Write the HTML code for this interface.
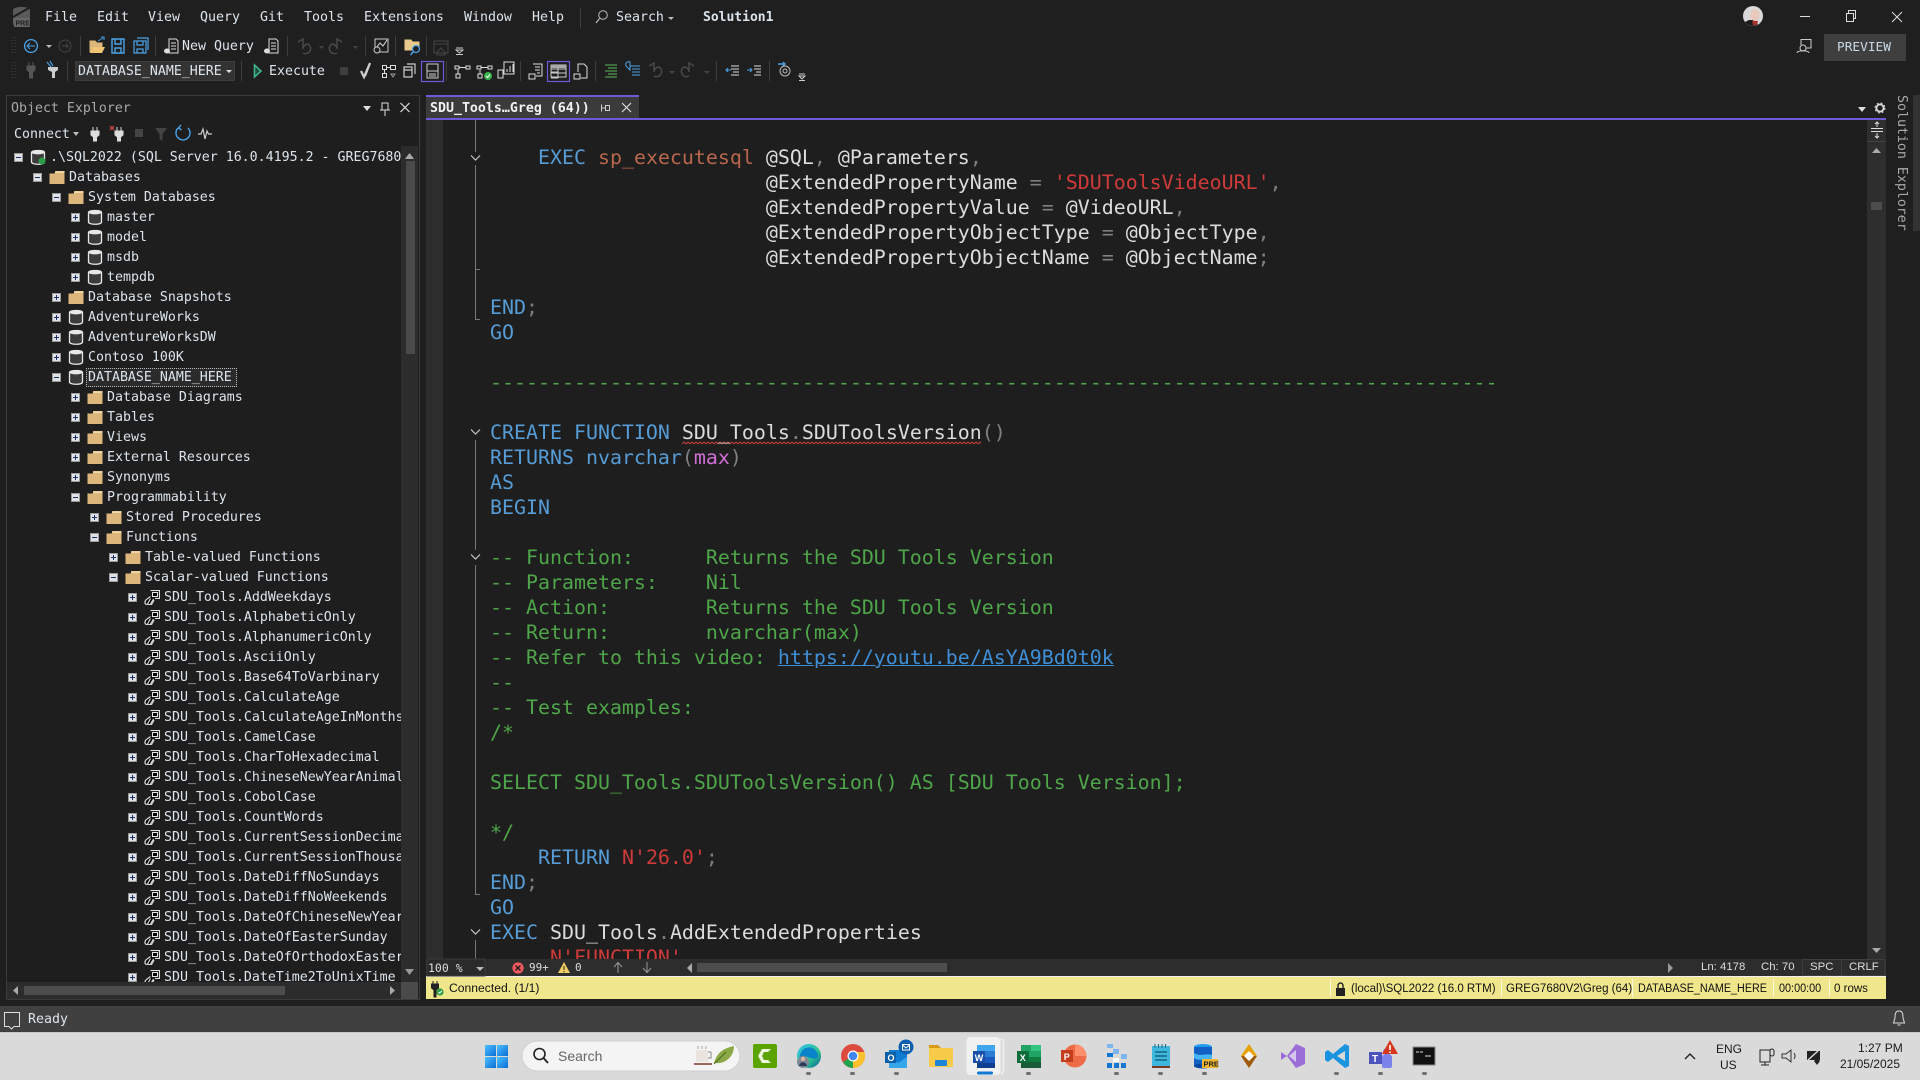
<!DOCTYPE html>
<html lang="en"><head><meta charset="utf-8"><title>SSMS</title>
<style>
*{box-sizing:border-box}
html,body{margin:0;padding:0;width:1920px;height:1080px;overflow:hidden;background:#1f1f1f}
body{position:relative;font-family:"DejaVu Sans Mono","Liberation Mono",monospace;font-size:13.28px;color:#dce4ec}
.a{position:absolute;white-space:pre;line-height:20px}
#bg{position:absolute;left:0;top:0;width:1920px;height:1080px}
#tree{position:absolute;left:0;top:148px;width:401px;height:834px;overflow:hidden}
.r{position:relative;height:20px;line-height:20px;white-space:pre;padding-left:calc(50px + 19px*var(--l))}
.r i{position:absolute;left:calc(14px + 19px*var(--l));top:5px;width:9px;height:9px;background:#dfe2e6;border:1px solid #9a9a9a}
.r i::before{content:"";position:absolute;left:1px;top:3px;width:5px;height:1px;background:#1c2f60}
.r i.p::after{content:"";position:absolute;left:3px;top:1px;width:1px;height:5px;background:#1c2f60}
.r svg{position:absolute;left:calc(30px + 19px*var(--l));top:1px;width:16px;height:16px}
.sel{display:inline-block;height:19px;line-height:17px;margin:0 0 0 -2px;padding:0 3px 0 1px;border:1px dotted #bbb;background:#2b2b2b;width:151px}
.l0{--l:0}.l1{--l:1}.l2{--l:2}.l3{--l:3}.l4{--l:4}.l5{--l:5}.l6{--l:6}
#code{position:absolute;left:443px;top:120px;width:1424px;height:839px;overflow:hidden;font-size:19.93px;color:#dcdcdc}
#code div{position:absolute;left:47px;height:25px;line-height:25px;white-space:pre}
.k{color:#569cd6}.c{color:#4fa64a}.s{color:#cf3a3a}.o{color:#808080}.f{color:#b9674c}.m{color:#d16fd6}.u{color:#3f8fd6;text-decoration:underline}
.y{position:absolute;top:977px;height:22px;line-height:22px;font-family:"Liberation Sans",sans-serif;font-size:12.4px;color:#111;white-space:pre;transform-origin:left center}
.st{position:absolute;top:959px;height:17px;line-height:17px;font-family:"Liberation Sans",sans-serif;font-size:11.4px;color:#ddd;white-space:pre}
.sa{font-family:"Liberation Sans",sans-serif;font-size:12px;color:#1a1a1a;position:absolute;white-space:pre;line-height:16px}
</style></head><body>
<svg id="bg" viewBox="0 0 1920 1080" xmlns="http://www.w3.org/2000/svg" fill="none">
<defs>
<linearGradient id="gw" x1="0" y1="0" x2="1" y2="1"><stop offset="0" stop-color="#4cc2ff"/><stop offset="1" stop-color="#0a6cd6"/></linearGradient>
<linearGradient id="ged" x1="0" y1="0" x2="1" y2="1"><stop offset="0" stop-color="#35c1f1"/><stop offset=".6" stop-color="#2ac48c"/><stop offset="1" stop-color="#0c59a4"/></linearGradient>
<pattern id="sq2" x="682" y="441" width="4" height="4" patternUnits="userSpaceOnUse"><path d="M0 3 2 1 4 3" stroke="#c93c3c" stroke-width="1"/></pattern>
<symbol id="db" viewBox="0 0 16 16"><path d="M1.5 3.5C1.5 .8 14.5 .8 14.5 3.5V13C14.5 16 1.5 16 1.5 13Z" fill="#3b3b3b" stroke="#e8e8e8" stroke-width="1.3"/><ellipse cx="8" cy="3.6" rx="6.2" ry="1.8" fill="#e8e8e8"/></symbol>
<symbol id="fo" viewBox="0 0 16 16"><path d="M.5 4.5 5.5 4.5 7 2H15.5V15H.5Z" fill="#dcb67a"/><path d="M6 2.2H15.5V4H6Z" fill="#f0d8a8"/></symbol>
<symbol id="fn" viewBox="0 0 16 16"><path d="M6.500 1.500H15.500V9.500H11" stroke="#e4e4e4" stroke-width="1.100" fill="#1f1f1f"/><path d="M8.500 3.500H13.500V7.500H8.500Z" stroke="#e4e4e4"/><path d="M6.500 7.500 2.500 10.500C.5 12 .5 15 2.500 15.500H7.500L10 11" stroke="#cfcfcf" stroke-width="1.300"/><path d="M3.500 15 6.500 9.500M6.500 15 9.500 10" stroke="#d8d8d8" stroke-width="1.200"/></symbol>
<symbol id="sq" viewBox="0 0 16 16"><path d="M1.5 2.5H5.5V6.5H1.5ZM9.5 2.5H14.5V6.5H9.5ZM1.5 10.5H5.5V14.5H1.5ZM6 4.5H9M3.5 7V10" stroke="#ddd"/><path d="M10 11H14L12 14Z" stroke="#999"/></symbol>
</defs>
<!-- panels -->
<rect x="6.5" y="95.5" width="413" height="904" fill="#1e1e1e" stroke="#3c3c3c"/>
<rect x="401" y="146" width="17" height="836" fill="#2c2c2c"/>
<rect x="406" y="161" width="9" height="193" fill="#4a4a4a"/>
<path d="M405 159 409.5 153 414 159Z" fill="#aaa"/><path d="M405 969 409.5 975 414 969Z" fill="#999"/>
<rect x="7" y="982" width="394" height="17" fill="#2c2c2c"/>
<rect x="24" y="986" width="261" height="9" fill="#4d4d4d"/>
<path d="M18 986V995L13 990.5Z" fill="#aaa"/><path d="M390 986V995L395 990.5Z" fill="#aaa"/>
<rect x="401" y="982" width="17" height="17" fill="#4a4a4a"/>
<!-- editor -->
<rect x="426" y="120" width="1441" height="839" fill="#1e1e1e"/>
<rect x="426" y="120" width="17" height="839" fill="#2d2d2d"/>
<rect x="426" y="95" width="213" height="25" fill="#3b3b3b"/>
<rect x="426" y="95" width="213" height="2" fill="#6b5bd6"/>
<rect x="426" y="118" width="1460" height="2" fill="#6b5bd6"/>
<g stroke="#777"><path d="M475.5 120V152M475.5 165V319.5H480M475.5 269.5H480M475.5 440V550M475.5 565V894.5H480M475.5 940V959"/></g>
<g stroke="#c8c8c8" stroke-width="1.2"><path d="M471 155.5 475.5 160 480 155.5M471 429.5 475.5 434 480 429.5M471 554.5 475.5 559 480 554.5M471 929.5 475.5 934 480 929.5"/></g>
<rect x="682" y="441" width="299" height="4" fill="url(#sq2)"/>
<!-- editor v-scroll -->
<rect x="1867" y="120" width="19" height="839" fill="#2e2e2e"/>
<path d="M1867 141.5H1886" stroke="#444"/><path d="M1871 128.5H1883M1871 131.5H1883M1877 122V127M1875 124 1877 122 1879 124M1877 133V138M1875 136 1877 138 1879 136" stroke="#ddd"/>
<path d="M1872 153 1876.5 148 1881 153Z" fill="#aaa"/><rect x="1871" y="202" width="11" height="8" fill="#4d4d4d"/>
<path d="M1872 948 1876.5 953 1881 948Z" fill="#aaa"/>
<!-- editor bottom -->
<rect x="426" y="959" width="1460" height="17" fill="#2d2d2d"/>
<rect x="426" y="976" width="1460" height="1" fill="#f0f0f0"/>
<rect x="426" y="977" width="1460" height="22" fill="#f0e68c"/>
<rect x="427" y="959" width="58" height="17" fill="#2a2a2a" stroke="#3a3a3a"/>
<path d="M476 967H484L480 971Z" fill="#bbb"/>
<circle cx="518" cy="968" r="5.6" fill="#f05a5f"/><path d="M515.5 965.5 520.5 970.5M520.5 965.5 515.5 970.5" stroke="#1a1a1a" stroke-width="1.3"/>
<path d="M564 962 570 973H558Z" fill="#f2cd66"/><path d="M564 966V970M564 971V972.2" stroke="#222"/>
<path d="M618 973V963M614 967 618 962.5 622 967M647 962V972M643 968 647 972.5 651 968" stroke="#999"/>
<path d="M692 963V973L687 968Z" fill="#aaa"/><rect x="697" y="963" width="250" height="9" fill="#4d4d4d"/>
<path d="M1668 963V973L1673 968Z" fill="#999"/>
<rect x="1802.5" y="959.5" width="39" height="16" stroke="#3e3e3e"/><rect x="1841.5" y="959.5" width="43.5" height="16" stroke="#3e3e3e"/>
<!-- yellow bar marks -->
<path d="M1330.5 979V997M1501.5 979V997M1632.5 979V997M1773.5 979V997M1829.5 979V997" stroke="#fbf8df"/>
<path d="M1336 988H1345V996H1336Z" fill="#222"/><path d="M1338 988V985.5A2.5 2.5 0 0 1 1343 985.5V988" stroke="#222" stroke-width="1.4"/>
<path d="M433 981V984M437 981V984M431.5 984H438.5V988L436 990V997H434V990L431.5 988Z" fill="#222" stroke="#222"/>
<circle cx="440" cy="992" r="3.6" fill="#2f9e44"/><path d="M438.4 992 439.6 993.2 441.8 990.8" stroke="#fff"/>
<!-- status / taskbar -->
<rect x="0" y="1006" width="1920" height="26" fill="#404040"/>
<rect x="0" y="1032" width="1920" height="48" fill="#dadada"/><path d="M0 1032.5H1920" stroke="#c8c8c8"/>
<path d="M4.5 1012.5H19.5V1026.5H14L11.5 1029 9 1026.5H4.5Z" stroke="#ddd"/>
<path d="M1899 1011C1895 1011 1895 1015 1895 1018L1893.5 1023H1904.5L1903 1018C1903 1015 1903 1011 1899 1011ZM1897.5 1025H1900.5" stroke="#ddd"/>
<!-- right strip -->
<rect x="1913" y="95" width="7" height="136" fill="#333"/>
<!-- title bar icons -->
<path d="M13 10C13 6 30 6 30 10V24C30 27 13 27 13 24Z" fill="#5a5a5a"/><path d="M13 17 29 8" stroke="#1f1f1f" stroke-width="2"/><rect x="14" y="18" width="16" height="9" fill="#666"/><text x="15.500" y="25.500" font-family="Liberation Sans" font-size="7" font-weight="700" fill="#222">PRE</text>
<path d="M580.5 8V28" stroke="#3d3d3d"/>
<circle cx="603" cy="15" r="4.3" stroke="#bbb"/><path d="M599.5 18.5 596 23" stroke="#bbb" stroke-width="1.2"/>
<path d="M668 17H674L671 20Z" fill="#bbb"/>
<circle cx="1753" cy="16" r="10" fill="#d8d8d8"/><path d="M1745 22A10 10 0 0 0 1758 24.5L1755 20H1749Z" fill="#1a1a1a"/><ellipse cx="1755" cy="15" rx="4.5" ry="6" fill="#e9c9bc"/><path d="M1752 21H1758L1757 25H1753Z" fill="#a7302f"/>
<path d="M1800 16.5H1810" stroke="#ddd"/><path d="M1846.5 13.5H1853.5V21.5H1846.5ZM1848.5 13V10.5H1855.5V18.5H1854" stroke="#ddd"/><path d="M1892 12 1902 22M1902 12 1892 22" stroke="#ddd"/>
<rect x="1824" y="34" width="82" height="27" fill="#3f3f3f"/>
<path d="M1801 45V39.5H1811V48H1806" stroke="#ccc"/><circle cx="1803" cy="48" r="3" stroke="#ccc" fill="#1f1f1f"/><path d="M1797 53C1797 50 1809 50 1809 53" stroke="#ccc"/>
<!-- tab icons -->
<path d="M1858 107H1866L1862 112Z" fill="#ddd"/><circle cx="1880" cy="108" r="3.6" stroke="#ddd" stroke-width="1.8"/><circle cx="1880" cy="108" r="5" stroke="#ddd" stroke-dasharray="2 2"/>
<path d="M601.5 104.500V111.500M601.500 108H605M605.500 105.500H609.500V110.500H605.500Z" stroke="#ccc"/><path d="M622 103 631 112M631 103 622 112" stroke="#ddd" stroke-width="1.2"/>
<!-- OE header -->
<path d="M363 106H371L367 111Z" fill="#ddd"/><path d="M382 103H388V110H382ZM380 110H390M385 110V116" stroke="#ddd"/><path d="M400.5 103 409.5 112M409.5 103 400.5 112" stroke="#ddd" stroke-width="1.2"/>
<path d="M73 132H79L76 136Z" fill="#bbb"/>
<g stroke="#ddd" stroke-width="1"><path d="M93 127V131M97 127V131M91 131H99V135L96.5 137V141H93.5V137L91 135Z" fill="#ddd"/><path d="M117 127V131M121 127V131M115 131H123V135L120.5 137V141H117.5V137L115 135Z" fill="#ddd"/></g>
<path d="M110 126 114 130M114 126 110 130" stroke="#e04a4a" stroke-width="1.2"/>
<rect x="135" y="129" width="8" height="8" fill="#444"/><path d="M155 128H167L162.5 134V141L159.5 139V134Z" fill="#444"/>
<path d="M178 128A7 7 0 1 0 188 128M181 125 178.5 128 181.5 130" stroke="#4aa3e8" stroke-width="1.4"/>
<path d="M198 134H201L203 129 205 139 207 131 208.5 134H212" stroke="#ccc" stroke-width="1.2"/>
<!-- toolbars -->
<g stroke="#3d3d3d"><path d="M80.5 36V56M155.5 36V56M287.5 36V56M365.5 36V56M395.5 36V56M426.5 36V56M67.5 61V81M241.5 61V81M446.5 61V81M520.5 61V81M595.5 61V81M716.5 61V81M769.5 61V81"/></g>
<path d="M12 37V55M15 37V55M12 62V80M15 62V80" stroke="#444" stroke-dasharray="1 2"/>
<circle cx="31" cy="46" r="6.4" stroke="#4aa3e8" stroke-width="1.3"/><path d="M35 46H27.5M30 43 27 46 30 49" stroke="#4aa3e8"/><path d="M46 45H52L49 48Z" fill="#bbb"/>
<circle cx="65" cy="46" r="6" stroke="#444"/><path d="M62 46H68M66 44 68 46 66 48" stroke="#444"/>
<path d="M90 41H95L97 43H102V52H90Z" fill="#dcb67a" stroke="#dcb67a"/><path d="M93 47H105L102 53H90Z" fill="#f0c674"/><path d="M98 41 103 38M101 37H104V40" stroke="#4aa3e8"/>
<path d="M112 39H124V53H112ZM115 39V44H121V39M115 53V48H121V53" stroke="#4aa3e8" stroke-width="1.4"/>
<path d="M134 41H146V53H134ZM137 41V45H143V41M137 53V49H143V53M137 38H148V50" stroke="#4aa3e8" stroke-width="1.2"/>
<path d="M169 39H176L178 41V53H169Z" stroke="#ddd"/><path d="M171 43H176M171 46H176M171 49H176" stroke="#ddd"/><ellipse cx="167" cy="51" rx="3" ry="2.5" fill="#ddd"/>
<path d="M269 39H276L278 41V53H269Z" stroke="#ddd"/><path d="M271 43H276M271 46H276M271 49H276" stroke="#ddd"/><ellipse cx="267" cy="51" rx="3" ry="2.5" fill="#ddd"/>
<path d="M298 42 303 39V49A5 5 0 0 1 308 44A5 5 0 0 1 303 53" stroke="#4a4a4a" stroke-width="1.4"/><path d="M319 46H324L321.5 49Z" fill="#444"/>
<path d="M342 42 337 39V49A5 5 0 0 0 332 44A5 5 0 0 0 337 53" stroke="#4a4a4a" stroke-width="1.4"/><path d="M353 46H358L355.5 49Z" fill="#444"/>
<rect x="375" y="39" width="13" height="13" stroke="#ccc"/><path d="M376 48 380 43 383 46 387 40" stroke="#ddd"/><circle cx="377" cy="50" r="3" stroke="#ccc" fill="#1f1f1f"/>
<path d="M405 40H411L412.5 42H419V50H405Z" fill="#e7c98b" stroke="#e7c98b"/><circle cx="416" cy="49" r="3.5" stroke="#4aa3e8" stroke-width="1.3" fill="#1f1f1f"/><path d="M413.5 51.5 410.5 55" stroke="#4aa3e8" stroke-width="1.4"/>
<path d="M434 41H448V53H434ZM434 44H448" stroke="#444"/><path d="M437 52 441 48 445 52V55H437Z" stroke="#444"/>
<path d="M456 50H463L459.5 53ZM456 48H463M456 54.5H463" stroke="#ccc"/>
<path d="M29 62V66M33 62V66M27 66H35V70L32.5 72V78H29.5V72L27 70Z" fill="#555" stroke="#555"/>
<path d="M51 63V67M55 63V67M48 67H58V70L55 72V78H52V72L48 70Z" fill="#ccc"/><path d="M47 62 51 67M50 61 53 66" stroke="#4aa3e8" stroke-width="1.2"/>
<rect x="75.5" y="61.5" width="159" height="19" fill="#333" stroke="#3d3d3d"/>
<path d="M226 70H232L229 73Z" fill="#ddd"/>
<path d="M254.500 65V77L261 71Z" stroke="#3fb38a" fill="#1f4a3c" stroke-width="1.600"/>
<rect x="340" y="67" width="8" height="8" fill="#3f3f3f"/>
<path d="M361 71 364 77 370 63 365 76" stroke="#cfcfcf" stroke-width="2.200"/>
<use href="#sq" x="381" y="63" width="16" height="16"/>
<path d="M404 67H412V77H404ZM407 64H415V74M404 70H412" stroke="#ccc" stroke-width="1.2"/>
<rect x="421.500" y="61.500" width="22" height="20" stroke="#6b5bd6" stroke-width="1.2"/><path d="M427 64H438V78H427ZM427 71H438M429 74H436M429 76H436" stroke="#ccc"/>
<g stroke="#ddd"><path d="M455 66H459V69H455ZM466 66H470V69H466ZM459 67.5H466M456 74H460V78H456ZM458 70V74"/><path d="M477 66H481V69H477ZM488 66H492V69H488ZM481 67.5H488M478 74H482V78H478ZM480 70V74"/></g>
<circle cx="488" cy="76" r="4" fill="#39b54a"/><path d="M486 76 487.5 77.5 490 74.5" stroke="#fff"/>
<path d="M498 70H503V78H498ZM504 62H514V74H504ZM507 72V69M510 72V66M513 72V64" stroke="#ddd"/>
<path d="M529 74H535V79H529ZM533 64H542V76H536M535 67H540M535 70H540M537 73H540" stroke="#ddd"/>
<rect x="547.500" y="61.500" width="22" height="20" stroke="#6b5bd6" stroke-width="1.2"/><path d="M551 65H566V77H551ZM551 69H566M551 73H566M558 65V77M551 72H558V78H551" stroke="#ccc"/><rect x="551" y="65" width="15" height="3" fill="#aaa"/>
<path d="M574 74H580V79H574ZM578 72V64H584L587 67V78H581" stroke="#ddd"/>
<path d="M605 65H617M608 68H617M605 71H617M608 74H617M605 77H617" stroke="#5cb85c"/>
<path d="M626 66A3 3 0 0 1 630 62V70L626 66M630 66H640M632 69H640M632 72H640M632 75H640" stroke="#4aa3e8"/>
<path d="M649 66 654 63V72A5 5 0 0 1 659 67A5 5 0 0 1 654 76" stroke="#4a4a4a" stroke-width="1.4"/><path d="M669 71H675L672 74Z" fill="#444"/>
<path d="M694 66 689 63V72A5 5 0 0 0 684 67A5 5 0 0 0 689 76" stroke="#4a4a4a" stroke-width="1.4"/><path d="M704 71H710L707 74Z" fill="#444"/>
<path d="M726 70H731M728 68 726 70 728 72" stroke="#4aa3e8"/><path d="M731 66H739M731 69H739M733 72H739M731 75H739" stroke="#ddd"/>
<path d="M747 70H752M750 68 752 70 750 72" stroke="#4aa3e8"/><path d="M754 66H761M754 69H761M756 72H761M754 75H761" stroke="#ddd"/>
<path d="M778 64H785M783 62 785 64 783 66" stroke="#4aa3e8" stroke-width="1.4"/><circle cx="785" cy="71" r="5" stroke="#bbb"/><circle cx="785" cy="71" r="2" stroke="#bbb"/>
<path d="M799 76H805L802 79ZM799 74H805M799 80.5H805" stroke="#ccc"/>
<!-- taskbar icons -->
<g fill="url(#gw)"><rect x="485" y="1045" width="11" height="11"/><rect x="497" y="1045" width="11" height="11"/><rect x="485" y="1057" width="11" height="11"/><rect x="497" y="1057" width="11" height="11"/></g>
<rect x="522" y="1041" width="218" height="30" rx="15" fill="#f4f4f4" stroke="#cfcfcf"/>
<circle cx="539.5" cy="1054" r="5.5" stroke="#222" stroke-width="1.6"/><path d="M543.5 1058 548 1063" stroke="#222" stroke-width="1.8"/>
<path d="M696 1050H708V1062H696Z" fill="#e9e4de"/><path d="M708 1052H711V1058H708" stroke="#888"/><path d="M694 1064H712" stroke="#7a3a2a" stroke-width="1.5"/><path d="M698 1046V1049M702 1046V1049M706 1046V1049" stroke="#aaa"/>
<path d="M714 1063C718 1050 726 1048 734 1046C734 1056 726 1064 716 1063Z" fill="#8aa845"/><path d="M714 1064 726 1052" stroke="#4d6a1e"/>
<rect x="753" y="1044" width="24" height="24" rx="2" fill="#5aa300"/><path d="M771 1049H762L758 1056 762 1063H771L768 1060H764L762 1056 764 1052H768Z" fill="#eef6e0"/>
<circle cx="809" cy="1056" r="12" fill="url(#ged)"/><path d="M800 1058A9 9 0 0 1 818 1055C818 1060 811 1059 808 1057 805 1056 802 1056 800 1058Z" fill="#0a84c8"/><circle cx="803" cy="1062" r="6" fill="#7e8a96"/><path d="M799 1066C800 1061 806 1061 807 1066Z" fill="#2b3b55"/><circle cx="803" cy="1059" r="2.2" fill="#d6b8a4"/>
<circle cx="853" cy="1056" r="12" fill="#dd4b3e"/><path d="M853 1056 843 1062A12 12 0 0 0 853 1068Z" fill="#1fa44f"/><path d="M853 1056V1068A12 12 0 0 0 864.5 1052H853Z" fill="#fbc02d"/><circle cx="853" cy="1056" r="5.5" fill="#fff"/><circle cx="853" cy="1056" r="4.3" fill="#4285f4"/>
<rect x="889" y="1050" width="18" height="18" fill="#0f7dd2"/><path d="M889 1057 898 1063 907 1057V1068H889Z" fill="#36a7e8"/><rect x="885" y="1052" width="11" height="11" fill="#0a5fa8"/><text x="887.5" y="1061" font-family="Liberation Sans" font-size="9" font-weight="700" fill="#fff">O</text>
<circle cx="906" cy="1047" r="7.5" fill="#0b5fb0"/><path d="M902.5 1044.5H909.5V1050H902.5ZM902.5 1045 906 1048 909.5 1045" stroke="#fff"/>
<path d="M929 1046H938L941 1048H953V1067H929Z" fill="#f7ca4a"/><path d="M929 1045H938L941 1048H929Z" fill="#d89b12"/><rect x="935" y="1060" width="12" height="6" rx="1" fill="#1c84d8"/>
<rect x="966.5" y="1037" width="34" height="38" rx="4" fill="#f1f1f1"/><path d="M1001 1039Q1003.5 1040 1003.5 1043V1069Q1003.5 1073 1001 1074" stroke="#f1f1f1" stroke-width="1.5"/>
<rect x="977" y="1045" width="18" height="23" fill="#2b7cd3"/><rect x="977" y="1045" width="18" height="6" fill="#41a5ee"/><rect x="977" y="1057" width="18" height="6" fill="#185abd"/><rect x="977" y="1063" width="18" height="5" fill="#103f91"/><rect x="973" y="1051" width="12" height="12" fill="#1a4fa8"/><text x="974.8" y="1061" font-family="Liberation Sans" font-size="9" font-weight="700" fill="#fff">W</text>
<rect x="977" y="1071.5" width="16" height="3" rx="1.5" fill="#0f78d4"/>
<rect x="1021" y="1045" width="20" height="23" fill="#21a366"/><rect x="1031" y="1045" width="10" height="6" fill="#33c481"/><rect x="1021" y="1057" width="20" height="5" fill="#107c41"/><rect x="1021" y="1062" width="20" height="6" fill="#185c37"/><rect x="1017" y="1051" width="12" height="12" fill="#0e6b3a"/><text x="1019.8" y="1061" font-family="Liberation Sans" font-size="9" font-weight="700" fill="#fff">X</text>
<circle cx="1075" cy="1056" r="11.5" fill="#ed6c47"/><path d="M1075 1044.5A11.5 11.5 0 0 1 1086.5 1056H1075Z" fill="#ff8f6b"/><rect x="1061" y="1050" width="12" height="12" fill="#c43e1c"/><text x="1063.8" y="1060" font-family="Liberation Sans" font-size="9" font-weight="700" fill="#fff">P</text>
<g fill="#7db5ef"><rect x="1107" y="1044" width="6" height="4"/><rect x="1113" y="1049" width="6" height="5"/><rect x="1121" y="1054" width="6" height="5"/></g><g fill="#0f78d4"><rect x="1107" y="1053" width="6" height="4"/><rect x="1107" y="1063" width="5" height="5"/><rect x="1114" y="1063" width="5" height="5"/><rect x="1121" y="1063" width="5" height="5"/></g><rect x="1113" y="1058" width="6" height="4" fill="#fff"/>
<rect x="1152" y="1046" width="18" height="20" fill="#3fb6dc"/><path d="M1155 1044V1048M1158.5 1044V1048M1162 1044V1048M1165.5 1044V1048" stroke="#1f6f8a"/><path d="M1155 1052H1167M1155 1056H1167M1155 1060H1167" stroke="#14657f" stroke-width="1.5"/><rect x="1152" y="1066" width="18" height="2" fill="#7a3a20"/>
<ellipse cx="1203" cy="1047" rx="9" ry="3" fill="#1d9bf0"/><rect x="1194" y="1047" width="18" height="19" fill="#1260c4"/><path d="M1194 1053C1200 1057 1206 1053 1212 1055V1059C1206 1058 1200 1062 1194 1058Z" fill="#45b6f5"/><ellipse cx="1203" cy="1066" rx="9" ry="2.5" fill="#0a47a0"/><rect x="1202" y="1059" width="16" height="9" fill="#f2b632"/><text x="1203.5" y="1066.5" font-family="Liberation Sans" font-size="7.5" font-weight="700" fill="#222">PRE</text>
<path d="M1249 1044 1257 1056 1249 1068 1241 1056Z" fill="#e7a100"/><path d="M1249 1056 1257 1056 1249 1068 1241 1056Z" fill="#a05a10"/><path d="M1249 1051 1254 1056 1249 1061 1244 1056Z" fill="#fff"/>
<path d="M1281 1052 1287 1056 1296 1044 1305 1048V1064L1296 1068 1287 1056 1281 1060Z" fill="#9b6dd7"/><path d="M1296 1050 1289 1056 1296 1062Z" fill="#d7c8f2"/>
<path d="M1345 1044 1349 1046V1066L1345 1068 1333 1058 1328 1062 1325 1060V1052L1328 1050 1333 1054ZM1345 1051 1337 1056 1345 1061Z" fill="#1a94e0"/>
<circle cx="1387" cy="1052" r="4" fill="#7b83eb"/><rect x="1382" y="1055" width="10" height="13" rx="2" fill="#7b83eb"/><rect x="1369" y="1052" width="13" height="12" fill="#4b53bc"/><text x="1372" y="1062" font-family="Liberation Sans" font-size="10" font-weight="700" fill="#fff">T</text>
<path d="M1390 1040 1398 1054H1382Z" fill="#d8361f"/><path d="M1390 1045V1050M1390 1051.5V1053" stroke="#fff" stroke-width="1.6"/>
<rect x="1413" y="1047" width="22" height="18" fill="#111" stroke="#888"/><path d="M1416 1052H1419M1420 1052H1423M1425 1056H1431" stroke="#ddd"/>
<g fill="#707070"><rect x="806" y="1072" width="5" height="3" rx="1.5"/><rect x="850" y="1072" width="5" height="3" rx="1.5"/><rect x="894" y="1072" width="5" height="3" rx="1.5"/><rect x="1026" y="1072" width="5" height="3" rx="1.5"/><rect x="1114" y="1072" width="5" height="3" rx="1.5"/><rect x="1158" y="1072" width="5" height="3" rx="1.5"/><rect x="1202" y="1072" width="5" height="3" rx="1.5"/><rect x="1334" y="1072" width="5" height="3" rx="1.5"/><rect x="1378" y="1072" width="5" height="3" rx="1.5"/><rect x="1422" y="1072" width="5" height="3" rx="1.5"/></g>
<path d="M1685 1059 1690 1054 1695 1059" stroke="#222" stroke-width="1.4"/>
<path d="M1760 1050H1770V1062H1760ZM1765 1062V1065M1761 1065H1769" stroke="#222"/><rect x="1770" y="1049" width="4" height="7" rx="2" stroke="#222"/>
<path d="M1782 1054H1786L1791 1050V1062L1786 1058H1782ZM1794 1053Q1796 1056 1794 1059" stroke="#333"/>
<path d="M1807 1051H1820V1060H1807Z" fill="#222"/><path d="M1808 1060 1818 1051" stroke="#dadada" stroke-width="1.5"/><path d="M1814 1061 1817 1065 1820 1061 1818 1059 1817 1060 1816 1059Z" fill="#222"/>
</svg>

<!-- menus -->
<div class="a" style="left:45px;top:8px">File</div><div class="a" style="left:97px;top:8px">Edit</div><div class="a" style="left:148px;top:8px">View</div><div class="a" style="left:200px;top:8px">Query</div><div class="a" style="left:260px;top:8px">Git</div><div class="a" style="left:304px;top:8px">Tools</div><div class="a" style="left:364px;top:8px">Extensions</div><div class="a" style="left:464px;top:8px">Window</div><div class="a" style="left:532px;top:8px">Help</div><div class="a" style="left:616px;top:8px">Search</div>
<div class="a" style="left:703px;top:8px;font-weight:700;font-size:13px">Solution1</div>
<div class="a" style="left:1837px;top:38px;font-size:12.8px;color:#c9d8e6">PREVIEW</div>
<div class="a" style="left:182px;top:37px">New Query</div>
<div class="a" style="left:78px;top:62px">DATABASE_NAME_HERE</div>
<div class="a" style="left:269px;top:62px;">Execute</div>
<div class="a" style="left:11px;top:99px;color:#a8a8a8">Object Explorer</div>
<div class="a" style="left:14px;top:125px">Connect</div>
<div class="a" style="left:430px;top:99px;font-weight:700;font-size:13.28px;color:#f2f2f2">SDU_Tools…Greg (64))</div>
<div class="a" style="left:1891px;top:95px;width:20px;height:136px;writing-mode:vertical-rl;line-height:20px;color:#a9a9a9">Solution Explorer</div>
<div class="a" style="left:28px;top:1010px;">Ready</div>

<div id="tree">
<div class="r l0"><i class="m"></i><svg viewBox="0 0 16 16"><use href="#db"/><circle cx="12" cy="12" r="3.5" fill="#2c9c46"/></svg>.\SQL2022 (SQL Server 16.0.4195.2 - GREG7680V2\Greg)</div>
<div class="r l1"><i class="m"></i><svg><use href="#fo"/></svg>Databases</div>
<div class="r l2"><i class="m"></i><svg><use href="#fo"/></svg>System Databases</div>
<div class="r l3"><i class="p"></i><svg><use href="#db"/></svg>master</div>
<div class="r l3"><i class="p"></i><svg><use href="#db"/></svg>model</div>
<div class="r l3"><i class="p"></i><svg><use href="#db"/></svg>msdb</div>
<div class="r l3"><i class="p"></i><svg><use href="#db"/></svg>tempdb</div>
<div class="r l2"><i class="p"></i><svg><use href="#fo"/></svg>Database Snapshots</div>
<div class="r l2"><i class="p"></i><svg><use href="#db"/></svg>AdventureWorks</div>
<div class="r l2"><i class="p"></i><svg><use href="#db"/></svg>AdventureWorksDW</div>
<div class="r l2"><i class="p"></i><svg><use href="#db"/></svg>Contoso 100K</div>
<div class="r l2"><i class="m"></i><svg><use href="#db"/></svg><span class="sel">DATABASE_NAME_HERE</span></div>
<div class="r l3"><i class="p"></i><svg><use href="#fo"/></svg>Database Diagrams</div>
<div class="r l3"><i class="p"></i><svg><use href="#fo"/></svg>Tables</div>
<div class="r l3"><i class="p"></i><svg><use href="#fo"/></svg>Views</div>
<div class="r l3"><i class="p"></i><svg><use href="#fo"/></svg>External Resources</div>
<div class="r l3"><i class="p"></i><svg><use href="#fo"/></svg>Synonyms</div>
<div class="r l3"><i class="m"></i><svg><use href="#fo"/></svg>Programmability</div>
<div class="r l4"><i class="p"></i><svg><use href="#fo"/></svg>Stored Procedures</div>
<div class="r l4"><i class="m"></i><svg><use href="#fo"/></svg>Functions</div>
<div class="r l5"><i class="p"></i><svg><use href="#fo"/></svg>Table-valued Functions</div>
<div class="r l5"><i class="m"></i><svg><use href="#fo"/></svg>Scalar-valued Functions</div>
<div class="r l6"><i class="p"></i><svg><use href="#fn"/></svg>SDU_Tools.AddWeekdays</div>
<div class="r l6"><i class="p"></i><svg><use href="#fn"/></svg>SDU_Tools.AlphabeticOnly</div>
<div class="r l6"><i class="p"></i><svg><use href="#fn"/></svg>SDU_Tools.AlphanumericOnly</div>
<div class="r l6"><i class="p"></i><svg><use href="#fn"/></svg>SDU_Tools.AsciiOnly</div>
<div class="r l6"><i class="p"></i><svg><use href="#fn"/></svg>SDU_Tools.Base64ToVarbinary</div>
<div class="r l6"><i class="p"></i><svg><use href="#fn"/></svg>SDU_Tools.CalculateAge</div>
<div class="r l6"><i class="p"></i><svg><use href="#fn"/></svg>SDU_Tools.CalculateAgeInMonths</div>
<div class="r l6"><i class="p"></i><svg><use href="#fn"/></svg>SDU_Tools.CamelCase</div>
<div class="r l6"><i class="p"></i><svg><use href="#fn"/></svg>SDU_Tools.CharToHexadecimal</div>
<div class="r l6"><i class="p"></i><svg><use href="#fn"/></svg>SDU_Tools.ChineseNewYearAnimal</div>
<div class="r l6"><i class="p"></i><svg><use href="#fn"/></svg>SDU_Tools.CobolCase</div>
<div class="r l6"><i class="p"></i><svg><use href="#fn"/></svg>SDU_Tools.CountWords</div>
<div class="r l6"><i class="p"></i><svg><use href="#fn"/></svg>SDU_Tools.CurrentSessionDecimalSeparator</div>
<div class="r l6"><i class="p"></i><svg><use href="#fn"/></svg>SDU_Tools.CurrentSessionThousandsSeparator</div>
<div class="r l6"><i class="p"></i><svg><use href="#fn"/></svg>SDU_Tools.DateDiffNoSundays</div>
<div class="r l6"><i class="p"></i><svg><use href="#fn"/></svg>SDU_Tools.DateDiffNoWeekends</div>
<div class="r l6"><i class="p"></i><svg><use href="#fn"/></svg>SDU_Tools.DateOfChineseNewYear</div>
<div class="r l6"><i class="p"></i><svg><use href="#fn"/></svg>SDU_Tools.DateOfEasterSunday</div>
<div class="r l6"><i class="p"></i><svg><use href="#fn"/></svg>SDU_Tools.DateOfOrthodoxEaster</div>
<div class="r l6"><i class="p"></i><svg><use href="#fn"/></svg>SDU_Tools.DateTime2ToUnixTime</div>
</div>

<div id="code">
<div style="top:25px">    <span class="k">EXEC</span> <span class="f">sp_executesql</span> @SQL<span class="o">,</span> @Parameters<span class="o">,</span></div>
<div style="top:50px">                       @ExtendedPropertyName <span class="o">=</span> <span class="s">'SDUToolsVideoURL'</span><span class="o">,</span></div>
<div style="top:75px">                       @ExtendedPropertyValue <span class="o">=</span> @VideoURL<span class="o">,</span></div>
<div style="top:100px">                       @ExtendedPropertyObjectType <span class="o">=</span> @ObjectType<span class="o">,</span></div>
<div style="top:125px">                       @ExtendedPropertyObjectName <span class="o">=</span> @ObjectName<span class="o">;</span></div>
<div style="top:175px"><span class="k">END</span><span class="o">;</span></div>
<div style="top:200px"><span class="k">GO</span></div>
<div style="top:250px"><span class="c">------------------------------------------------------------------------------------</span></div>
<div style="top:300px"><span class="k">CREATE FUNCTION</span> SDU_Tools<span class="o">.</span>SDUToolsVersion<span class="o">()</span></div>
<div style="top:325px"><span class="k">RETURNS nvarchar</span><span class="o">(</span><span class="m">max</span><span class="o">)</span></div>
<div style="top:350px"><span class="k">AS</span></div>
<div style="top:375px"><span class="k">BEGIN</span></div>
<div style="top:425px"><span class="c">-- Function:      Returns the SDU Tools Version</span></div>
<div style="top:450px"><span class="c">-- Parameters:    Nil</span></div>
<div style="top:475px"><span class="c">-- Action:        Returns the SDU Tools Version</span></div>
<div style="top:500px"><span class="c">-- Return:        nvarchar(max)</span></div>
<div style="top:525px"><span class="c">-- Refer to this video: </span><span class="u">https://youtu.be/AsYA9Bd0t0k</span></div>
<div style="top:550px"><span class="c">--</span></div>
<div style="top:575px"><span class="c">-- Test examples:</span></div>
<div style="top:600px"><span class="c">/*</span></div>
<div style="top:650px"><span class="c">SELECT SDU_Tools.SDUToolsVersion() AS [SDU Tools Version];</span></div>
<div style="top:700px"><span class="c">*/</span></div>
<div style="top:725px">    <span class="k">RETURN</span> <span class="s">N'26.0'</span><span class="o">;</span></div>
<div style="top:750px"><span class="k">END</span><span class="o">;</span></div>
<div style="top:775px"><span class="k">GO</span></div>
<div style="top:800px"><span class="k">EXEC</span> SDU_Tools<span class="o">.</span>AddExtendedProperties</div>
<div style="top:825px">     <span class="s">N'FUNCTION'</span><span class="o">,</span></div>
</div>

<div class="a" style="left:428px;top:958px;font-size:11.5px;color:#ddd">100 %</div>
<div class="a" style="left:529px;top:958px;font-size:11px;color:#ddd">99+</div>
<div class="a" style="left:575px;top:958px;font-size:11px;color:#ddd">0</div>
<div class="st" style="left:1701px">Ln: 4178</div><div class="st" style="left:1761px">Ch: 70</div><div class="st" style="left:1810px">SPC</div><div class="st" style="left:1849px">CRLF</div>
<div class="y" style="left:449px;transform:scaleX(.98)">Connected. (1/1)</div>
<div class="y" style="left:1351px;transform:scaleX(.93)">(local)\SQL2022 (16.0 RTM)</div>
<div class="y" style="left:1506px;transform:scaleX(.93)">GREG7680V2\Greg (64)</div>
<div class="y" style="left:1638px;transform:scaleX(.87)">DATABASE_NAME_HERE</div>
<div class="y" style="left:1779px;transform:scaleX(.875)">00:00:00</div>
<div class="y" style="left:1834px;transform:scaleX(.93)">0 rows</div>
<div class="sa" style="left:558px;top:1048px;font-size:14px;color:#666">Search</div>
<div class="sa" style="left:1716px;top:1041px">ENG</div><div class="sa" style="left:1720px;top:1057px">US</div>
<div class="sa" style="left:1858px;top:1040px;width:42px;text-align:right">1:27 PM</div>
<div class="sa" style="left:1839px;top:1056px;width:61px;text-align:right">21/05/2025</div>
</body></html>
